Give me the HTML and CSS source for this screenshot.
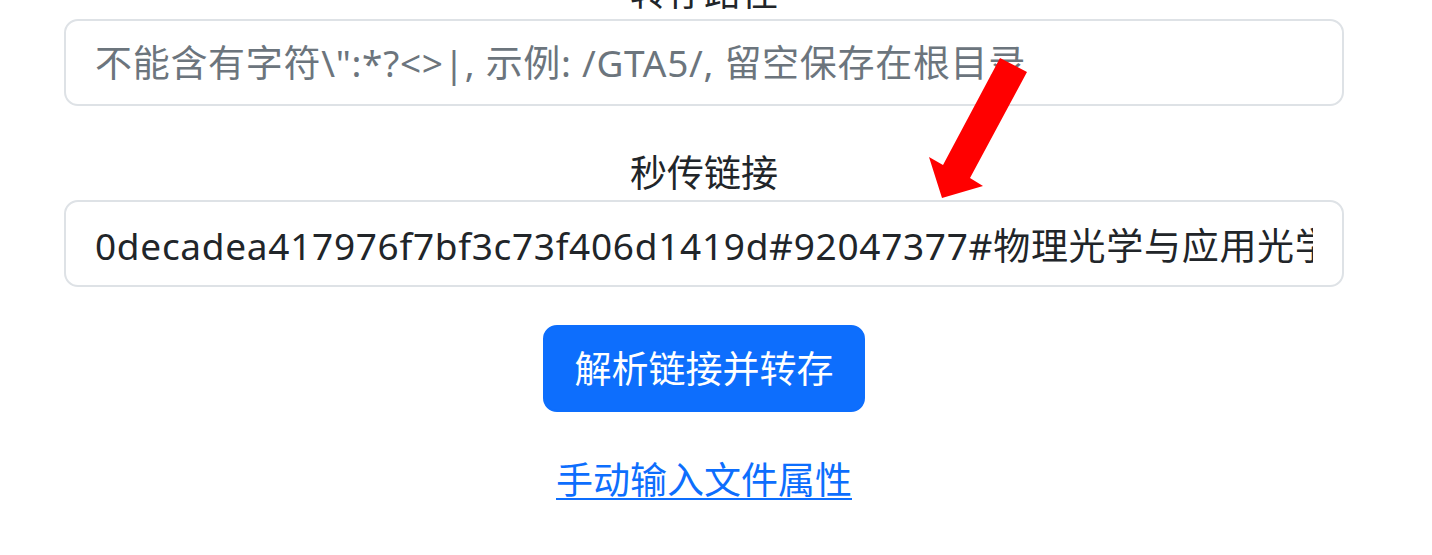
FILE: index.html
```html
<!DOCTYPE html>
<html lang="zh-CN">
<head>
<meta charset="utf-8">
<title>秒传链接</title>
<link rel="stylesheet" href="styles.css">
</head>
<body>
<div class="form-wrap">
  <div class="field">
    <label class="field-label" for="savePath">转存路径</label>
    <input class="field-input" id="savePath" type="text" placeholder="不能含有字符\&quot;:*?&lt;&gt;|, 示例: /GTA5/, 留空保存在根目录">
  </div>
  <div class="field">
    <label class="field-label" for="link">秒传链接</label>
    <input class="field-input" id="link" type="text" value="0decadea417976f7bf3c73f406d1419d#92047377#物理光学与应用光学.pdf">
  </div>
  <div class="actions">
    <button class="btn-primary" type="button">解析链接并转存</button>
  </div>
  <div class="manual">
    <a class="manual-link" href="#">手动输入文件属性</a>
  </div>
</div>
<svg class="annot-arrow" width="1432" height="555" viewBox="0 0 1432 555" aria-hidden="true">
  <polygon points="1000,58 1027,72 970,178 983,186 942,198 929,157 943,165" fill="#ff0000"/>
</svg>
</body>
</html>
```

FILE: styles.css
```css
html, body {
  margin: 0;
  padding: 0;
  background: #ffffff;
}

body {
  font-family: "Noto Sans", "Noto Sans CJK SC", sans-serif;
  color: #212529;
  overflow: hidden;
  height: 555px;
}

.form-wrap {
  width: 1280px;
  margin: -36px 0 0 64px;
  display: flex;
  flex-direction: column;
}

.field {
  display: flex;
  flex-direction: column;
  margin-bottom: 39px;
}

.field + .field {
  margin-bottom: 0;
}

.field-label {
  display: block;
  text-align: center;
  font-size: 37px;
  line-height: 55px;
  height: 55px;
  color: #212529;
}

.field-input {
  box-sizing: border-box;
  width: 100%;
  height: 87px;
  padding: 0 29px;
  border: 2px solid #dee2e6;
  border-radius: 14px;
  font-family: "Noto Sans", "Noto Sans CJK SC", sans-serif;
  font-size: 37px;
  letter-spacing: 0.7px;
  color: #212529;
  background: #ffffff;
  outline: none;
}

.field-input::placeholder {
  color: #6c757d;
  opacity: 1;
}

.actions {
  display: flex;
  justify-content: center;
  margin-top: 38px;
}

.btn-primary {
  box-sizing: border-box;
  height: 87px;
  width: 322px;
  padding: 0;
  border: 2px solid #0d6efd;
  border-radius: 14px;
  background: #0d6efd;
  color: #ffffff;
  font-family: "Noto Sans", "Noto Sans CJK SC", sans-serif;
  font-size: 37px;
  line-height: 55px;
  cursor: pointer;
}

.manual {
  display: flex;
  justify-content: center;
  margin-top: 40px;
  line-height: 55px;
}

.manual-link {
  font-size: 37px;
  color: #0d6efd;
  text-decoration: underline;
  text-decoration-thickness: 2px;
  text-underline-offset: 4px;
}

.annot-arrow {
  position: absolute;
  top: 0;
  left: 0;
  pointer-events: none;
}
```
